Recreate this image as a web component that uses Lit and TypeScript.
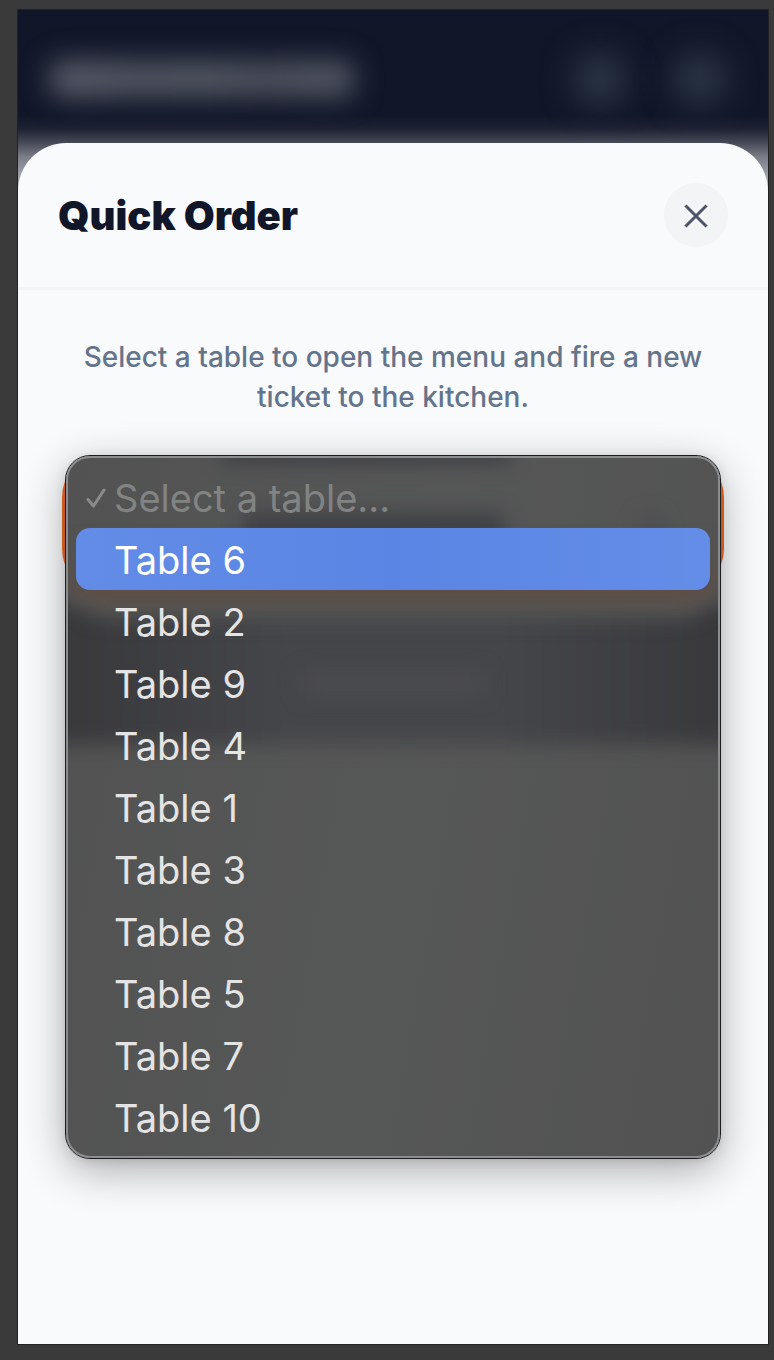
import { LitElement, html, css, svg } from "lit";
import { customElement, state } from "lit/decorators.js";

const TABLES = [6, 2, 9, 4, 1, 3, 8, 5, 7, 10];

const checkIcon = svg`<path d="M2 12.5 7.5 19 18 3" />`;

@customElement("table-picker")
export class TablePicker extends LitElement {
  @state() private active = 6;

  static styles = css`
    :host {
      display: block;
      position: relative;
    }
    * {
      box-sizing: border-box;
    }
    .field {
      display: block;
      width: 100%;
      height: 132px;
      margin: 0;
      border: 4px solid #f26f24;
      border-radius: 40px;
      background: #ffffff;
      color: #0f172a;
      font: 700 32px/40px Inter, "Liberation Sans", sans-serif;
      text-align: center;
      appearance: none;
      outline: none;
    }
    .menu {
      position: absolute;
      top: -1px;
      left: 4px;
      right: 4px;
      padding: 8px;
      border: 2px solid #8b8d8e;
      outline: 1px solid #1c1c1e;
      border-radius: 24px;
      background: linear-gradient(100deg, #525252, #565757 50%, #525252);
      box-shadow: 0 12px 44px rgba(0, 0, 0, 0.32), 0 2px 12px rgba(0, 0, 0, 0.12);
      overflow: hidden;
    }
    .glass {
      position: absolute;
      inset: 0;
      pointer-events: none;
    }
    .glow {
      position: absolute;
      filter: blur(10px);
    }
    .caption {
      top: -14px;
      left: 24%;
      width: 44%;
      height: 18px;
      background: #3b3c42;
    }
    .value {
      top: 56px;
      left: 27%;
      width: 40%;
      height: 24px;
      background: #3d3e44;
    }
    .arrow {
      top: 60px;
      left: 88%;
      width: 20px;
      height: 16px;
      background: #4b4c4f;
    }
    .action {
      top: 146px;
      left: -24px;
      right: -24px;
      height: 140px;
      background: linear-gradient(90deg, #38383b, #45464a 35%, #45464a 65%, #38383b);
    }
    .plate {
      top: 90px;
      left: 2px;
      right: 2px;
      height: 70px;
      border-radius: 0 0 40px 40px;
      background: #555554;
    }
    .ring {
      top: 114px;
      left: 2px;
      right: 2px;
      height: 24px;
      border-radius: 0 0 24px 24px;
      background: #624b40;
    }
    .action-text {
      top: 214px;
      left: 36%;
      width: 28%;
      height: 22px;
      background: #4b4c4f;
    }
    .option {
      position: relative;
      display: flex;
      align-items: center;
      width: 100%;
      height: 62px;
      margin: 0;
      padding: 2px 8px 0 10px;
      border: 0;
      border-radius: 14px;
      background: none;
      color: #e4e4e4;
      font: 400 38px/48px Inter, "Liberation Sans", sans-serif;
      text-align: left;
    }
    .option:disabled {
      color: #828383;
    }
    .option.active {
      background: linear-gradient(90deg, #628ce6, #5a85e4 50%, #638de7);
      color: #ffffff;
    }
    .mark {
      flex: none;
      width: 20px;
      height: 22px;
      margin-right: 8px;
      fill: none;
      stroke: #8a8b8b;
      stroke-width: 3;
      stroke-linecap: round;
      stroke-linejoin: round;
    }
  `;

  render() {
    return html`
      <select class="field" aria-label="Table"></select>
      <div class="menu" role="listbox" aria-label="Table">
        <div class="glass" aria-hidden="true">
          <div class="glow caption"></div>
          <div class="glow value"></div>
          <div class="glow arrow"></div>
          <div class="glow action"></div>
          <div class="glow plate"></div>
          <div class="glow ring"></div>
          <div class="glow action-text"></div>
        </div>
        <button class="option" role="option" aria-selected="true" disabled>
          <svg class="mark" viewBox="0 0 20 22" aria-hidden="true">${checkIcon}</svg>
          <span>Select a table...</span>
        </button>
        ${TABLES.map(
          (n) => html`
            <button
              class="option ${n === this.active ? "active" : ""}"
              role="option"
              aria-selected="false"
              @mouseenter=${() => (this.active = n)}
            >
              <svg class="mark" viewBox="0 0 20 22" aria-hidden="true"></svg>
              <span>Table ${n}</span>
            </button>
          `
        )}
      </div>
    `;
  }
}

@customElement("app-root")
export class AppRoot extends LitElement {
  static styles = css`
    :host {
      display: block;
      font-family: Inter, "Liberation Sans", sans-serif;
    }
    * {
      box-sizing: border-box;
    }
    .page {
      display: flex;
      min-height: 100vh;
      padding: 9px 5px 15px 17px;
      background: #3a3a3a;
    }
    .app {
      flex: 1;
      display: flex;
      flex-direction: column;
      min-width: 0;
      border: 1px solid #222224;
      background: linear-gradient(
        #111729 106px,
        #1e2233 119px,
        #474a57 133px,
        #7b7d88 147px,
        #a3a5ae 168px
      );
      overflow: hidden;
    }
    .topbar {
      display: flex;
      align-items: center;
      height: 133px;
      padding: 4px 42px 0 32px;
      gap: 48px;
    }
    .brand {
      width: 304px;
      height: 36px;
      margin-right: auto;
      border-radius: 12px;
      background: linear-gradient(90deg, #5e5f6d, #525663 30%, #555965 50%, #4e515e 70%, #575b67);
      filter: blur(14px);
    }
    .tool {
      width: 52px;
      height: 52px;
      border-radius: 26px;
      background: #2c3747;
      filter: blur(16px);
    }
    .sheet {
      flex: 1;
      border-radius: 48px 48px 0 0;
      background: #f9fafc;
    }
    .head {
      display: flex;
      align-items: center;
      justify-content: space-between;
      height: 147px;
      padding: 0 40px;
      border-bottom: 3px solid #f3f4f6;
    }
    .title {
      margin: 0;
      padding-top: 2px;
      color: #111729;
      font-size: 40px;
      font-weight: 900;
      line-height: 48px;
    }
    .close {
      display: grid;
      place-items: center;
      width: 64px;
      height: 64px;
      padding: 2px 0 0;
      border: 0;
      border-radius: 32px;
      background: #f3f4f6;
    }
    .cross {
      width: 26px;
      height: 26px;
      fill: none;
      stroke: #4b5565;
      stroke-width: 3;
      stroke-linecap: square;
    }
    .body {
      display: flex;
      flex-direction: column;
      gap: 40px;
      padding: 47px 44px;
    }
    .hint {
      margin: 0;
      padding: 0 16px;
      color: #64748b;
      font-size: 28px;
      font-weight: 500;
      line-height: 40px;
      text-align: center;
    }
  `;

  render() {
    return html`
      <div class="page">
        <div class="app">
          <div class="topbar" aria-hidden="true">
            <div class="brand"></div>
            <div class="tool"></div>
            <div class="tool"></div>
          </div>
          <main class="sheet">
            <header class="head">
              <h1 class="title">Quick Order</h1>
              <button class="close" aria-label="Close">
                <svg class="cross" viewBox="0 0 26 26" aria-hidden="true">
                  <path d="M3.5 3.5 22.5 22.5M22.5 3.5 3.5 22.5" />
                </svg>
              </button>
            </header>
            <section class="body">
              <p class="hint">Select a table to open the menu and fire a new ticket to the kitchen.</p>
              <table-picker></table-picker>
            </section>
          </main>
        </div>
      </div>
    `;
  }
}
